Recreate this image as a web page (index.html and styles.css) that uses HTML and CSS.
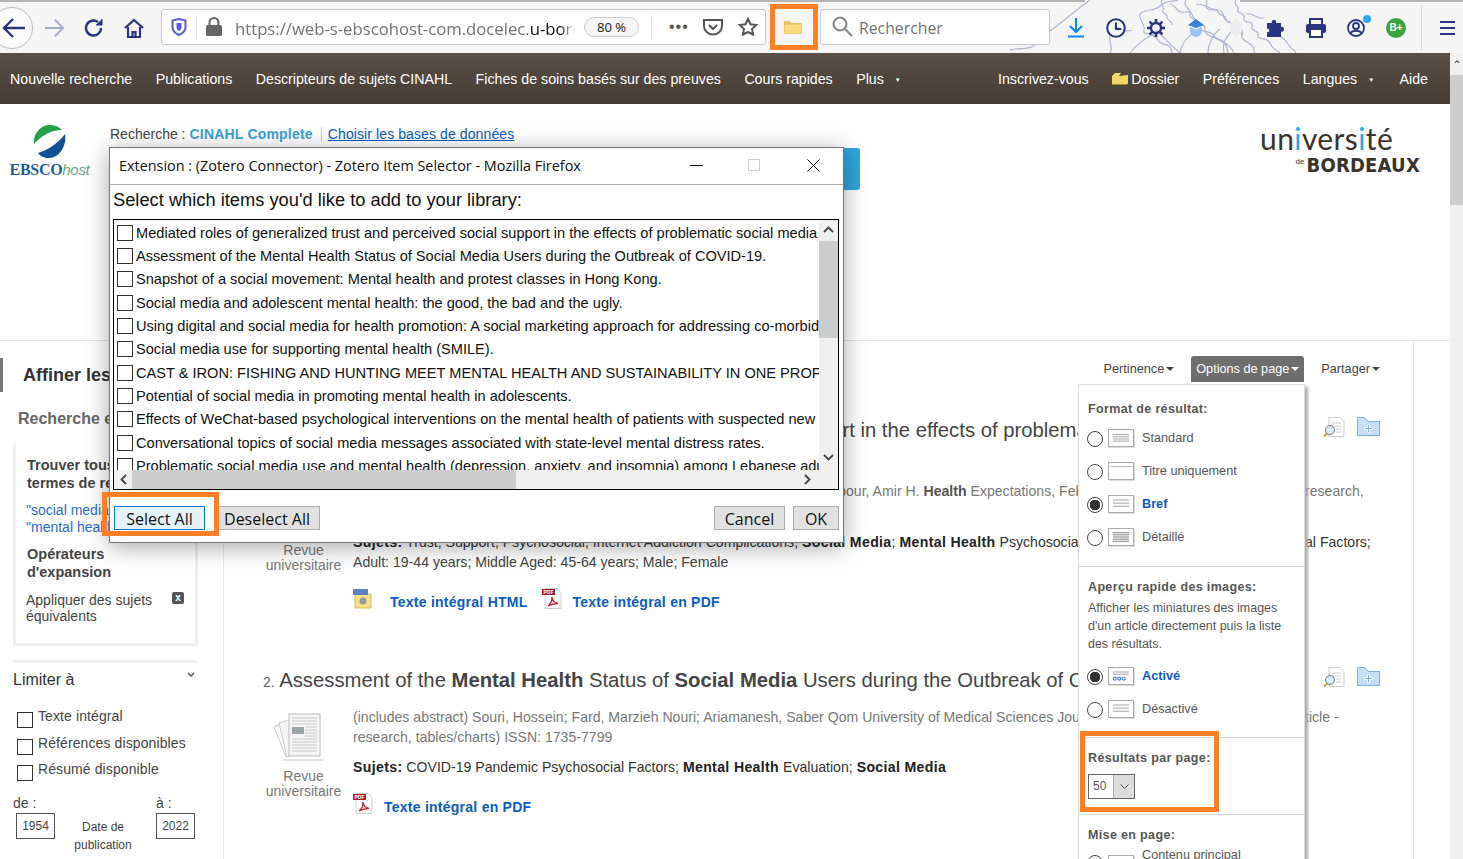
FILE: index.html
```html
<!DOCTYPE html>
<html lang="fr">
<head>
  <meta charset="UTF-8">
  <title>Résultats de la recherche : EBSCOhost</title>
  <link rel="stylesheet" href="styles.css">
</head>
<body>

<svg class="defs" width="0" height="0">
  <symbol id="fmt-std" viewBox="0 0 26 18"><path d="M4 5h18M4 7.500h18M4 10h18M4 12.500h18" stroke="#999" fill="none"/></symbol>
  <symbol id="fmt-title" viewBox="0 0 26 18"><path d="M1 4h24" stroke="#aaa" fill="none"/></symbol>
  <symbol id="fmt-brief" viewBox="0 0 26 18"><path d="M4 4.500h18M4 8h18M4 11.500h18" stroke="#999" fill="none"/></symbol>
  <symbol id="fmt-detail" viewBox="0 0 26 18"><path d="M4 4h18M4 6h18M4 8h18M4 10h18M4 12h18M4 14h18" stroke="#888" fill="none"/></symbol>
  <symbol id="fmt-thumb" viewBox="0 0 26 18"><path d="M4 4.500h18M4 7h18" stroke="#999" fill="none"/><path d="M4.500 10.500h3v3h-3zM9.500 10.500h3v3h-3zM14.500 10.500h3v3h-3z" stroke="#36c" fill="none"/></symbol>
  <symbol id="pdf" viewBox="0 0 20 21">
    <path d="M3 .5h12l4 4v16H3z" fill="#fff" stroke="#ccc"/>
    <rect x="0" y="1" width="13" height="6" fill="#a81e2d"/>
    <text x="1.500" y="6" font-family="Liberation Sans" font-size="5" font-weight="700" fill="#fff">PDF</text>
    <path d="M6 18c3-2 4-6 4-9 .5 4 3 6 6 6.500-4 0-7 1-10 2.500z" fill="none" stroke="#c4202c" stroke-width="1.300"/>
  </symbol>
  <symbol id="doc-find" viewBox="0 0 22 21">
    <path d="M6 .5h11l4 4v15H6z" fill="#fff" stroke="#ccc"/>
    <path d="M9 6h9M9 9h9M13 12h5M13 15h5" stroke="#ccc"/>
    <circle cx="7" cy="13" r="4.500" fill="#dcebf7" stroke="#777"/>
    <path d="M4 16.500l-3 3" stroke="#c9a02c" stroke-width="2"/>
  </symbol>
  <symbol id="folder-add" viewBox="0 0 23 19">
    <path d="M.5 18.500V.5h7l4 4h11v14z" fill="#c6def9" stroke="#7fb2ec"/>
    <path d="M11.500 7.500v8M7.500 11.500h8" stroke="#fff" stroke-width="3"/>
    <path d="M11.500 8v7M8 11.500h7" stroke="#7fb2ec"/>
  </symbol>
  <symbol id="journal" viewBox="0 0 50 50">
    <path d="M1 14l13-6 12 30-13 6z" fill="#fafafa" stroke="#ccc"/>
    <path d="M6 10l12-4 8 34-12 4z" fill="#f4f4f4" stroke="#ccc"/>
    <rect x="16" y="1" width="31" height="42" fill="#f5f5f5" stroke="#bbb"/>
    <path d="M19 5h25M19 8h25M19 11h25M32 14h12M32 17h12M32 20h12M32 23h12M19 26h25M19 29h25M19 32h25M19 35h25M19 38h25" stroke="#c8c8c8"/>
    <rect x="19" y="14" width="12" height="7" fill="#9aa5a8"/>
    <path d="M10 47h40" stroke="#e2e2e2" stroke-width="2"/>
  </symbol>
</svg>

<header class="toolbar">
  <svg class="lace" width="460" height="53" viewBox="0 0 460 53" fill="none" stroke="#aeb5d2" stroke-width="1.200">
    <path d="M0 50c10-3 18 1 26-6 8-6 6-10 12-12 8-4 30-24 42-32"/>
    <path d="M130 14c6-6 14-2 20-8 6-6 12-4 18-6M130 14c-2 6 6 10 4 16s10 2 14 10 12 0 14 13"/>
    <path d="M160 4c8 2 6 10 16 8s4 10 14 12 0 8 10 12 16 2 18 17"/>
    <path d="M176 0c-4 8 6 8 4 14s10 4 10 12 12 4 14 10 14 4 20 17"/>
    <path d="M146 30c6 4 10 12 24 23M120 53c6-8 14-14 24-19M170 53c2-10 8-18 18-22M186 4c10 0 14 6 22 6s2 10 12 12 14 8 12 14 14 6 12 17"/>
    <path d="M104 28c8-2 10 6 18 2M100 36c-2 6 4 12 0 17"/>
    <path d="M152 0c-3 5 3 6 1 10s5 3 4 7 6 3 5 8M196 0c3 4-3 6 2 9s8-2 10 3 8 2 8 7 8 3 8 8 7 2 8 8"/>
    <path d="M226 0c-3 6 4 6 2 10s8 2 6 8 10 2 8 8 8 4 6 9 10 2 12 8 5 6 10 10"/>
    <path d="M214 53c-2-10 2-16 8-22M198 53c0-8 4-18 12-24M236 14c8-2 10 6 18 4M262 36c6-2 12 2 16 8s6 5 8 9"/>
  </svg>
  <button class="back-btn"><svg width="24" height="22" viewBox="0 0 24 22" fill="none" stroke="#2a3480" stroke-width="2.400"><path d="M11 2L2 11l9 9M2 11h21"/></svg></button>
  <span class="tb-icon tb-forward"><svg width="22" height="20" viewBox="0 0 22 20" fill="none" stroke="#a5abcc" stroke-width="2.200"><path d="M12 1l9 9-9 9M21 10H1"/></svg></span>
  <span class="tb-icon"><svg width="20" height="20" viewBox="0 0 20 20" fill="none" stroke="#2a3480" stroke-width="2.400"><path d="M17 10a7.500 7.500 0 1 1-3-6"/><path d="M18 1v6h-6" fill="#2a3480" stroke-width="1"/></svg></span>
  <span class="tb-icon"><svg width="20" height="20" viewBox="0 0 20 20" fill="none" stroke="#2a3480" stroke-width="2.200"><path d="M1 10l9-8 9 8"/><path d="M4 9v10h12V9M8.500 19v-5h3v5"/></svg></span>

  <div class="urlbar">
    <svg class="url-shield" width="16" height="18" viewBox="0 0 16 18"><path d="M1.500 2.500L8 1l6.500 1.500V9c0 4-3 6.500-6.500 8C4.500 15.500 1.500 13 1.500 9z" fill="none" stroke="#5b5bd6" stroke-width="2"/><path d="M5.500 5h5v4c0 2-1 3-2.500 4C6.500 12 5.500 11 5.500 9z" fill="#5b5bd6"/></svg>
    <span class="url-sep"></span>
    <svg class="url-lock" width="16" height="19" viewBox="0 0 16 19"><path d="M3.500 8V5.500a4.500 4.500 0 0 1 9 0V8" fill="none" stroke="#666" stroke-width="2"/><rect y="8" width="16" height="11" rx="1.500" fill="#666"/></svg>
    <span class="url-text">https://web-s-ebscohost-com.docelec.<b>u-bordeaux.fr/ehost</b></span>
    <span class="url-zoom">80 %</span>
    <span class="url-sep url-sep-wide"></span>
    <span class="url-dots">•••</span>
    <svg class="url-pocket" width="20" height="18" viewBox="0 0 20 18" fill="none" stroke="#555" stroke-width="2"><path d="M1 2h18v6a9 8.500 0 0 1-18 0z"/><path d="M6 7l4 4 4-4"/></svg>
    <svg class="url-star" width="20" height="19" viewBox="0 0 20 19" fill="none" stroke="#555" stroke-width="2"><path d="M10 2l2.500 5.300 5.700.7-4.200 4 1.100 5.700L10 15l-5.100 2.700L6 12 1.800 8l5.700-.7z"/></svg>
  </div>

  <span class="tb-folder"><svg width="18" height="14" viewBox="0 0 18 14"><path d="M0 1h6l2 2h9v3H0z" fill="#e9c46a"/><rect y="4" width="18" height="10" fill="#f6dc7a" stroke="#e3b866"/></svg></span>

  <div class="searchbar">
    <svg width="21" height="21" viewBox="0 0 21 21" fill="none" stroke="#8a8a8a" stroke-width="2.200"><circle cx="8" cy="8" r="6.500"/><path d="M13 13l7 7"/></svg>
    <span>Rechercher</span>
  </div>

  <div class="tb-right">
    <span class="tb-slot"><svg width="18" height="20" viewBox="0 0 18 20" fill="none" stroke="#0a84ff" stroke-width="2"><path d="M9 0v13M3 8l6 6 6-6M1 18.500h16"/></svg></span>
    <span class="tb-slot"><svg width="20" height="20" viewBox="0 0 20 20" fill="none" stroke="#2a3480" stroke-width="2"><circle cx="10" cy="10" r="8.800"/><path d="M10 4.500V11h5"/></svg></span>
    <span class="tb-slot"><svg width="20" height="20" viewBox="0 0 20 20" fill="none" stroke="#2a3480"><circle cx="10" cy="10" r="5" stroke-width="2.400"/><path d="M10 1v4M10 15v4M1 10h4M15 10h4M3.600 3.600l3 3M13.400 13.400l3 3M16.400 3.600l-3 3M6.600 13.400l-3 3" stroke-width="2.600"/></svg></span>
    <span class="tb-slot"><svg width="18" height="18" viewBox="0 0 18 18"><path d="M9 0l8 6-8 3-8-3z" fill="#3b7fd8"/><path d="M3 8l6 2.500L15 8v4a6 6 0 0 1-12 0z" fill="#9cc3f5"/></svg></span>
    <span class="tb-slot"><svg width="14" height="18" viewBox="0 0 14 18"><path d="M7 0l6 4v9l-6 5-6-5V4z" fill="#ececee"/></svg></span>
    <span class="tb-slot"><svg width="20" height="20" viewBox="0 0 20 20"><path d="M1 5h5c-1.500-4 5.500-4 4 0h5v4c4-1.500 4 6 0 4.500V19H1v-5c3 1.500 3-4.500 0-3z" fill="#2a3480"/></svg></span>
    <span class="tb-slot"><svg width="20" height="20" viewBox="0 0 20 20"><path d="M4 8V1h12v7" fill="none" stroke="#2a3480" stroke-width="2"/><rect y="6" width="20" height="9" rx="2" fill="#2a3480"/><rect x="4" y="11" width="12" height="8" fill="#fff" stroke="#2a3480" stroke-width="2"/></svg></span>
    <span class="tb-slot tb-account"><svg width="18" height="18" viewBox="0 0 18 18" fill="none" stroke="#2a3480" stroke-width="1.800"><circle cx="9" cy="9" r="8"/><circle cx="9" cy="7" r="3"/><path d="M3.500 14c2-3 9-3 11 0"/></svg><i class="account-dot"></i></span>
    <span class="tb-slot"><span class="green-badge">B+</span></span>
  </div>
  <span class="tb-sep"></span>
  <span class="tb-menu"><i></i><i></i><i></i></span>
</header>

<div class="page">
  <div class="page-main">
    <nav class="topnav">
      <a>Nouvelle recherche</a>
      <a>Publications</a>
      <a>Descripteurs de sujets CINAHL</a>
      <a>Fiches de soins basés sur des preuves</a>
      <a>Cours rapides</a>
      <a>Plus <span class="nav-caret">▼</span></a>
      <span class="nav-spacer"></span>
      <a>Inscrivez-vous</a>
      <a class="nav-folder"><svg width="16" height="13" viewBox="0 0 16 13"><path d="M0 12V4l3-3h6L7 4l9-1v9z" fill="#f1d66b"/><path d="M0 12.500h15" stroke="#a8862a"/></svg>Dossier</a>
      <a>Préférences</a>
      <a>Langues <span class="nav-caret">▼</span></a>
      <a>Aide</a>
    </nav>

    <section class="masthead">
      <div class="ebsco-logo">
        <svg width="33" height="33" viewBox="0 0 33 33">
          <path d="M1 19C0 8 8 0 17 0c4 0 8 1 12 5C18 5 8 11 1 19z" fill="#25a04a"/>
          <path d="M32 9c2 11-5 24-16 24-5 0-9-2-11-5C12 26 24 20 32 9z" fill="#0f5196"/>
        </svg>
        <div class="ebsco-word">EBSCO<em>host</em></div>
      </div>
      <div class="search-head">
        <div class="search-line">Recherche : <b>CINAHL Complete</b><span class="pipe"></span><a>Choisir les bases de données</a></div>
        <div class="search-form"><span class="search-input"></span><span class="search-go"></span></div>
      </div>
      <div class="bx-logo">
        <div class="bx-top">un<span>i</span>vers<span>i</span>té</div>
        <div class="bx-bottom"><small>de</small>BORDEAUX</div>
      </div>
    </section>

    <div class="content">
      <aside class="sidebar">
        <div class="side-head">Affiner les résultats</div>
        <div class="side-sub">Recherche en cours</div>
        <div class="side-box">
          <div class="box-title">Trouver tous mes<br>termes de recherche :</div>
          <div class="box-query">"social media" AND<br>"mental health"</div>
          <div class="box-title box-ops">Opérateurs<br>d'expansion</div>
          <div class="box-apply"><span>Appliquer des sujets équivalents</span><i class="box-x">x</i></div>
        </div>
        <div class="side-rule"></div>
        <div class="limit-head">Limiter à <svg width="8" height="6" viewBox="0 0 8 6" fill="none" stroke="#555" stroke-width="1.500"><path d="M1 1l3 3 3-3"/></svg></div>
        <label class="limit-row"><input type="checkbox"><span>Texte intégral</span></label>
        <label class="limit-row"><input type="checkbox"><span>Références disponibles</span></label>
        <label class="limit-row"><input type="checkbox"><span>Résumé disponible</span></label>
        <div class="dates">
          <span>de :</span><span>à :</span>
          <div class="date-from"><span class="date-field">1954</span><span class="date-label">Date de publication</span></div>
          <span class="date-field">2022</span>
        </div>
      </aside>

      <main class="results">
        <div class="sort-row">
          <span class="sort-item">Pertinence<i class="caret"></i></span>
          <span class="sort-item sort-active">Options de page<i class="caret"></i></span>
          <span class="sort-item">Partager<i class="caret"></i></span>
        </div>

        <article class="result result-first">
          <div class="result-head">
            <h3 class="result-title"><span class="num">1.</span> Mediated roles of generalized trust and perceived social support in the effects of problematic social media use</h3>
            <svg class="tool" width="22" height="21"><use href="#doc-find"/></svg>
            <svg class="tool" width="23" height="19"><use href="#folder-add"/></svg>
          </div>
          <div class="result-row">
            <div class="rtype rtype-tall"><svg width="50" height="50"><use href="#journal"/></svg><div>Revue universitaire</div></div>
            <div class="rbody">
              <div class="rline"><span>Mediated roles of generalized trust and perceived social support</span></div>
              <div class="rline"><span>(includes abstract) Yuan, Qiang; Sarafraz, Mohammad; Griffiths, Mark D.; Pakpour, Amir H. <b class="hit">Health</b> Expectations, Feb</span><span>research,</span></div>
              <div class="rline"><span>tables/charts)</span></div>
              <div class="rline rline-sub"><span><b>Sujets:</b> Trust; Support, Psychosocial; Internet Addiction Complications; <b>Social Media</b>; <b>Mental Health</b> Psychosocial Factors;</span><span>al Factors;</span></div>
              <div class="rline rline-dark"><span>Adult: 19-44 years; Middle Aged: 45-64 years; Male; Female</span></div>
              <div class="rlinks">
                <svg width="20" height="21" viewBox="0 0 20 21"><path d="M2 6h16v14H2z" fill="#f5e08a" stroke="#d6bd5e"/><rect y="1" width="15" height="6" fill="#5b7fc0"/><circle cx="10" cy="13" r="3.500" fill="#999"/></svg>
                <a class="link-html">Texte intégral HTML</a>
                <svg width="20" height="21"><use href="#pdf"/></svg>
                <a class="link-pdf">Texte intégral en PDF</a>
              </div>
            </div>
          </div>
        </article>

        <article class="result">
          <div class="result-head">
            <h3 class="result-title"><span class="num">2.</span> Assessment of the <b>Mental Health</b> Status of <b>Social Media</b> Users during the Outbreak of COVID-19.</h3>
            <svg class="tool" width="22" height="21"><use href="#doc-find"/></svg>
            <svg class="tool" width="23" height="19"><use href="#folder-add"/></svg>
          </div>
          <div class="result-row">
            <div class="rtype"><svg width="50" height="50"><use href="#journal"/></svg><div>Revue universitaire</div></div>
            <div class="rbody">
              <div class="rline"><span>(includes abstract) Souri, Hossein; Fard, Marzieh Nouri; Ariamanesh, Saber Qom University of Medical Sciences Journal</span><span>ticle -</span></div>
              <div class="rline"><span>research, tables/charts) ISSN: 1735-7799</span></div>
              <div class="rline rline-sub"><span><b>Sujets:</b> COVID-19 Pandemic Psychosocial Factors; <b>Mental Health</b> Evaluation; <b>Social Media</b></span></div>
              <div class="rlinks rlinks-single">
                <svg width="20" height="21"><use href="#pdf"/></svg>
                <a>Texte intégral en PDF</a>
              </div>
            </div>
          </div>
        </article>
      </main>
    </div>
  </div>
  <div class="vscroll"><span class="vscroll-arrow">⌃</span><span class="vscroll-thumb"></span></div>
</div>

<div class="options-menu">
  <section class="opt-section opt-format">
    <h4>Format de résultat:</h4>
    <label class="opt-row"><input type="radio" name="fmt"><svg class="fmt"><use href="#fmt-std"/></svg>Standard</label>
    <label class="opt-row"><input type="radio" name="fmt"><svg class="fmt"><use href="#fmt-title"/></svg>Titre uniquement</label>
    <label class="opt-row opt-on"><input type="radio" name="fmt" checked><svg class="fmt"><use href="#fmt-brief"/></svg>Bref</label>
    <label class="opt-row"><input type="radio" name="fmt"><svg class="fmt"><use href="#fmt-detail"/></svg>Détaillé</label>
  </section>
  <section class="opt-section opt-preview">
    <h4>Aperçu rapide des images:</h4>
    <p>Afficher les miniatures des images d'un article directement puis la liste des résultats.</p>
    <label class="opt-row opt-on"><input type="radio" name="pre" checked><svg class="fmt"><use href="#fmt-thumb"/></svg>Activé</label>
    <label class="opt-row"><input type="radio" name="pre"><svg class="fmt"><use href="#fmt-brief"/></svg>Désactivé</label>
  </section>
  <section class="opt-section opt-count">
    <h4>Résultats par page:</h4>
    <div class="count-select"><span>50</span><i><svg width="9" height="5" viewBox="0 0 9 5" fill="none" stroke="#555"><path d="M.5.500l4 4 4-4"/></svg></i></div>
  </section>
  <section class="opt-section opt-layout">
    <h4>Mise en page:</h4>
    <label class="opt-row opt-row-top"><input type="radio" name="lay"><svg class="fmt"><use href="#fmt-brief"/></svg>Contenu principal</label>
  </section>
</div>

<div class="dialog">
  <div class="dialog-title">
    <span>Extension : (Zotero Connector) - Zotero Item Selector - Mozilla Firefox</span>
    <svg class="win-min" width="13" height="1"><path d="M0 .5h13" stroke="#000"/></svg>
    <svg class="win-max" width="12" height="12"><path d="M.5.500h11v11H.5z" fill="none" stroke="#ccc"/></svg>
    <svg class="win-close" width="13" height="13"><path d="M.5.500l12 12M12.500.500l-12 12" stroke="#000"/></svg>
  </div>
  <div class="dialog-body">
    <div class="dialog-lead">Select which items you'd like to add to your library:</div>
    <div class="pick-box">
      <ul class="pick-list">
        <li><input type="checkbox">Mediated roles of generalized trust and perceived social support in the effects of problematic social media</li>
        <li><input type="checkbox">Assessment of the Mental Health Status of Social Media Users during the Outbreak of COVID-19.</li>
        <li><input type="checkbox">Snapshot of a social movement: Mental health and protest classes in Hong Kong.</li>
        <li><input type="checkbox">Social media and adolescent mental health: the good, the bad and the ugly.</li>
        <li><input type="checkbox">Using digital and social media for health promotion: A social marketing approach for addressing co-morbid physical and mental illness.</li>
        <li><input type="checkbox">Social media use for supporting mental health (SMILE).</li>
        <li><input type="checkbox">CAST &amp; IRON: FISHING AND HUNTING MEET MENTAL HEALTH AND SUSTAINABILITY IN ONE PROFESSION.</li>
        <li><input type="checkbox">Potential of social media in promoting mental health in adolescents.</li>
        <li><input type="checkbox">Effects of WeChat-based psychological interventions on the mental health of patients with suspected new coronavirus pneumonia.</li>
        <li><input type="checkbox">Conversational topics of social media messages associated with state-level mental distress rates.</li>
        <li><input type="checkbox">Problematic social media use and mental health (depression, anxiety, and insomnia) among Lebanese adults during the COVID-19 pandemic.</li>
      </ul>
      <div class="pick-vbar">
        <svg width="11" height="7" viewBox="0 0 11 7" fill="none" stroke="#444" stroke-width="1.800"><path d="M1 6l4.500-4.500L10 6"/></svg>
        <span class="pick-vthumb"></span>
        <svg class="arrow-end" width="11" height="7" viewBox="0 0 11 7" fill="none" stroke="#444" stroke-width="1.800"><path d="M1 1l4.500 4.500L10 1"/></svg>
      </div>
      <div class="pick-hbar">
        <svg width="7" height="11" viewBox="0 0 7 11" fill="none" stroke="#444" stroke-width="1.800"><path d="M6 1L1.500 5.500 6 10"/></svg>
        <span class="pick-hthumb"></span>
        <svg class="arrow-end" width="7" height="11" viewBox="0 0 7 11" fill="none" stroke="#444" stroke-width="1.800"><path d="M1 1l4.500 4.500L1 10"/></svg>
      </div>
    </div>
    <div class="dialog-actions">
      <button class="dlg-btn dlg-primary">Select All</button>
      <button class="dlg-btn dlg-deselect">Deselect All</button>
      <span class="actions-spacer"></span>
      <button class="dlg-btn dlg-cancel">Cancel</button>
      <button class="dlg-btn dlg-ok">OK</button>
    </div>
  </div>
</div>

<div class="mark mark-folder"></div>
<div class="mark mark-select"></div>
<div class="mark mark-count"></div>

</body>
</html>
```

FILE: styles.css
```css
* {
  box-sizing: border-box;
}
html, body {
  height: 859px;
  overflow: hidden;
}
body {
  margin: 0;
  position: relative;
  font-family: "Liberation Sans", Arial, sans-serif;
  font-size: 14px;
  color: #444;
  background: #fff;
}
.defs {
  position: absolute;
}
h3, h4, p, ul {
  margin: 0;
  padding: 0;
}

/* browser toolbar */
.toolbar {
  position: relative;
  height: 53px;
  display: flex;
  align-items: center;
  padding-top: 2px;
  background: linear-gradient(to right, #b3b3b8 1085px, transparent 1085px, transparent 1240px, #b3b3b8 1240px) top left / 100% 2px no-repeat #f5f5f6;
  overflow: hidden;
}
.lace {
  position: absolute;
  left: 1010px;
  top: 0;
}
.back-btn {
  width: 42px;
  height: 42px;
  margin-left: -9px;
  padding: 0 0 0 6px;
  border: 1px solid #bbb;
  border-radius: 50%;
  background: #fafafa;
  display: flex;
  align-items: center;
  justify-content: flex-start;
  flex: none;
  position: relative;
}
.back-btn svg {
  margin-left: 4px;
}
.tb-icon {
  width: 20px;
  margin-left: 20px;
  display: flex;
  justify-content: center;
  flex: none;
  position: relative;
}
.tb-forward {
  margin-left: 11px;
}
.urlbar {
  width: 605px;
  height: 36px;
  margin-left: 17px;
  margin-top: -2px;
  display: flex;
  align-items: center;
  flex: none;
  position: relative;
  background: #fff;
  border: 1px solid #c8c8cc;
  border-radius: 3px;
}
.url-shield {
  margin-left: 9px;
}
.url-sep {
  width: 1px;
  height: 24px;
  margin-left: 9px;
  background: #e3e3e3;
}
.url-lock {
  margin-left: 9px;
}
.url-text {
  width: 340px;
  margin-left: 13px;
  padding-top: 3px;
  overflow: hidden;
  white-space: nowrap;
  font-family: "Open Sans", sans-serif;
  font-size: 16.700px;
  color: #737373;
  -webkit-mask-image: linear-gradient(to right, #000 325px, transparent 340px);
  mask-image: linear-gradient(to right, #000 325px, transparent 340px);
}
.url-text b {
  font-weight: 400;
  color: #111;
}
.url-zoom {
  width: 55px;
  height: 20px;
  margin-left: 9px;
  border: 1px solid #ccc;
  border-radius: 10px;
  background: #f5f5f5;
  color: #222;
  font-size: 13px;
  line-height: 18px;
  text-align: center;
  font-family: "Open Sans", sans-serif;
}
.url-sep-wide {
  margin-left: 12px;
}
.url-dots {
  margin-left: 17px;
  font-size: 16px;
  letter-spacing: 1px;
  color: #555;
}
.url-pocket {
  margin-left: 14px;
}
.url-star {
  margin-left: 15px;
}
.tb-folder {
  width: 54px;
  display: flex;
  justify-content: center;
  flex: none;
  margin-top: -2px;
}
.searchbar {
  width: 230px;
  height: 36px;
  margin-top: -2px;
  padding-left: 11px;
  display: flex;
  align-items: center;
  gap: 6px;
  flex: none;
  position: relative;
  background: #fff;
  border: 1px solid #c8c8cc;
  border-radius: 3px;
  font-family: "Open Sans", sans-serif;
  font-size: 15.800px;
  color: #737373;
}
.searchbar span {
  padding-top: 3px;
}
.tb-right {
  margin-left: 6px;
  display: flex;
  flex: none;
  position: relative;
}
.tb-slot {
  width: 40px;
  height: 24px;
  position: relative;
  display: flex;
  align-items: center;
  justify-content: center;
}
.account-dot {
  position: absolute;
  right: 5px;
  top: -1px;
  width: 8px;
  height: 8px;
  border-radius: 50%;
  background: #29a8f0;
}
.green-badge {
  width: 20px;
  height: 20px;
  border-radius: 50%;
  background: #38a33f;
  color: #fff;
  font-size: 10px;
  font-weight: 700;
  line-height: 20px;
  text-align: center;
}
.tb-sep {
  width: 1px;
  height: 44px;
  margin-left: 5px;
  background: #dcdcdc;
  position: relative;
}
.tb-menu {
  width: 15px;
  margin-left: 18px;
  display: flex;
  flex-direction: column;
  gap: 4px;
  position: relative;
}
.tb-menu i {
  height: 2px;
  background: #2a3480;
}

.page {
  display: flex;
  height: 806px;
}
.page-main {
  flex: 1;
  min-width: 0;
}
.vscroll {
  width: 13px;
  background: #f0f0f0;
  display: flex;
  flex-direction: column;
  align-items: center;
  flex: none;
}
.vscroll-arrow {
  height: 22px;
  font-size: 12px;
  line-height: 24px;
  color: #555;
}
.vscroll-thumb {
  width: 100%;
  height: 130px;
  background: #cdcdcd;
}

/* ebsco nav */
.topnav {
  height: 51px;
  padding: 0 22px 0 10px;
  display: flex;
  align-items: center;
  gap: 23.500px;
  background: linear-gradient(#5a4f46, #463c33);
  color: #fff;
  font-size: 14.200px;
  white-space: nowrap;
}
.nav-spacer {
  flex: 1;
}
.nav-caret {
  display: inline-block;
  margin-left: 7px;
  padding-right: 2px;
  font-size: 6px;
  vertical-align: 2px;
}
.nav-folder {
  display: flex;
  align-items: center;
  gap: 3px;
}

.masthead {
  height: 237px;
  padding: 20px 30px 0 9px;
  display: flex;
  border-bottom: 1px solid #e5e5e5;
}
.ebsco-logo {
  width: 81px;
  text-align: center;
  flex: none;
}
.ebsco-logo svg {
  display: block;
  margin: 1px auto 0;
}
.ebsco-word {
  margin-top: 3px;
  font-family: "Liberation Serif", serif;
  font-size: 16px;
  font-weight: 700;
  color: #1c5c9c;
  letter-spacing: -0.3px;
  white-space: nowrap;
}
.ebsco-word em {
  font-family: "Liberation Sans", sans-serif;
  font-weight: 400;
  font-size: 15px;
  color: #6aa88c;
}
.search-head {
  margin-left: 20px;
  width: 750px;
}
.search-line {
  display: flex;
  align-items: center;
  height: 20px;
  gap: 4px;
}
.search-line b {
  color: #3aa0dc;
  letter-spacing: .2px;
}
.search-line a {
  color: #0a5cc8;
  text-decoration: underline;
  letter-spacing: .1px;
}
.pipe {
  width: 1px;
  height: 15px;
  margin: 0 2px 0 4px;
  background: #ccc;
}
.search-form {
  display: flex;
  justify-content: space-between;
  height: 42px;
  margin-top: 4px;
}
.search-go {
  width: 120px;
  background: #31a6dc;
  border-radius: 3px;
}
.bx-logo {
  margin-left: auto;
  width: 160px;
  color: #39332e;
  white-space: nowrap;
}
.bx-top {
  font-family: Lato, sans-serif;
  font-weight: 400;
  font-size: 30px;
  line-height: 28px;
  letter-spacing: .4px;
}
.bx-top span {
  color: #2aa7df;
}
.bx-bottom {
  font-family: "Liberation Sans Narrow", "DejaVu Sans Condensed", sans-serif;
  font-weight: 700;
  font-size: 20px;
  line-height: 19px;
  letter-spacing: .2px;
  text-align: right;
}
.bx-bottom small {
  font-family: "Liberation Sans", sans-serif;
  font-size: 8px;
  font-weight: 400;
  letter-spacing: 0;
  vertical-align: 8px;
  margin-right: 2px;
}

.content {
  display: flex;
  height: 518px;
}

/* left column */
.sidebar {
  width: 224px;
  flex: none;
  padding-left: 13px;
  border-right: 1px solid #e8e8e8;
}
.side-head {
  height: 34px;
  margin: 17px 0 0 -13px;
  padding-left: 20px;
  border-left: 3px solid #777;
  font-size: 18px;
  font-weight: 700;
  line-height: 34px;
  color: #333;
  white-space: nowrap;
}
.side-sub {
  margin: 17px 0 0 5px;
  font-size: 16px;
  font-weight: 700;
  line-height: 20px;
  color: #666;
  white-space: nowrap;
}
.side-box {
  width: 185px;
  height: 204px;
  margin-top: 13px;
  padding: 11px 11px 0;
  border: 3px solid #eee;
  border-top-color: #fff;
}
.box-title {
  font-size: 14.500px;
  font-weight: 700;
  line-height: 18px;
  color: #444;
  white-space: nowrap;
}
.box-query {
  margin: 10px 0 0 -1px;
  line-height: 17px;
  color: #2a6ad0;
  white-space: nowrap;
}
.box-ops {
  margin-top: 9px;
}
.box-apply {
  margin: 11px 0 0 -1px;
  display: flex;
  justify-content: space-between;
  line-height: 16px;
}
.box-apply span {
  width: 135px;
}
.box-x {
  width: 12px;
  height: 12px;
  margin: 0;
  background: #555;
  border-radius: 2px;
  color: #fff;
  font-size: 10px;
  font-style: normal;
  font-weight: 700;
  line-height: 11px;
  text-align: center;
}
.side-rule {
  width: 185px;
  height: 3px;
  margin-top: 14px;
  background: #f0f0f0;
}
.limit-head {
  width: 185px;
  margin: 6px 0 12px;
  padding-right: 3px;
  display: flex;
  justify-content: space-between;
  font-size: 16px;
  line-height: 22px;
  color: #333;
}
.limit-head svg {
  margin: 3px 0 0;
}
.limit-row {
  height: 26.500px;
  margin-left: 4px;
  display: flex;
  gap: 5px;
  line-height: 26px;
  letter-spacing: .1px;
}
.limit-row input, .pick-list input {
  appearance: none;
  width: 16px;
  height: 16px;
  margin: 0;
  flex: none;
  background: #fff;
  border: 1px solid #333;
}
.limit-row input {
  margin-top: 9px;
}
.dates {
  margin-top: 11px;
  display: grid;
  grid-template-columns: 138px 42px;
  column-gap: 5px;
  line-height: 18px;
}
.date-from {
  display: flex;
}
.date-field {
  width: 39px;
  height: 26px;
  margin: 1px 0 0 3px;
  border: 1px solid #555;
  font-size: 12px;
  line-height: 24px;
  text-align: center;
  flex: none;
}
.date-from .date-label {
  flex: 1;
  margin-top: 6px;
  font-size: 12px;
  text-align: center;
}
.dates > .date-field {
  margin-left: 0;
}

/* results */
.results {
  flex: 1;
  min-width: 0;
  margin-right: 36px;
  padding-left: 39px;
  border-right: 1px solid #e8e8e8;
}
.sort-row {
  height: 26px;
  margin-top: 15px;
  padding-right: 33px;
  display: flex;
  justify-content: flex-end;
  align-items: center;
  gap: 17px;
  font-size: 12.700px;
}
.sort-item {
  height: 26px;
  padding-top: 1px;
  line-height: 25px;
  white-space: nowrap;
}
.sort-active {
  padding: 1px 5px 0;
  background: #6e6e6e;
  border-radius: 3px 3px 0 0;
  color: #fff;
}
.caret {
  display: inline-block;
  margin: 0 0 2px 2px;
  border: 4px solid transparent;
  border-bottom: 0;
  border-top-color: currentColor;
}
.result {
  margin-bottom: 54px;
}
.result-first {
  margin-top: 34px;
}
.result-head {
  height: 28px;
  display: flex;
}
.result-title {
  width: 815px;
  flex: none;
  overflow: hidden;
  white-space: nowrap;
  font-size: 20.270px;
  font-weight: 400;
  line-height: 28px;
  color: #444;
}
.result-title .num {
  font-size: 14px;
  color: #666;
}
.tool {
  margin-top: 1px;
  flex: none;
}
.tool:first-of-type {
  margin-left: 245px;
}
.tool + .tool {
  margin-left: 12px;
}
.result-row {
  margin-top: 13px;
  display: flex;
}
.result-first .result-row {
  margin-top: 17px;
}
.rtype {
  width: 80px;
  margin-right: 10px;
  padding-left: 1px;
  flex: none;
  color: #777;
  line-height: 15px;
  text-align: center;
}
.rtype svg {
  display: block;
  margin: 6px auto 6px;
  transform: translateX(-6px);
}
.rtype-tall {
  padding-top: 20px;
}
.rbody {
  flex: 1;
  min-width: 0;
}
.rline {
  display: grid;
  grid-template-columns: 725px 1fr;
  column-gap: 227px;
  font-size: 14.100px;
  line-height: 20px;
  color: #777;
  white-space: nowrap;
}
.rline > span:first-child {
  overflow: hidden;
}
.rline b {
  letter-spacing: .35px;
}
.rline .hit {
  color: #555;
  letter-spacing: 0;
}
.rline-sub {
  margin-top: 10px;
  color: #333;
}
.result-first .rline-sub {
  margin-top: 11px;
}
.rline-sub b {
  color: #222;
}
.rline-dark {
  color: #444;
}
.rlinks {
  margin-top: 20px;
  height: 20px;
  display: flex;
  align-items: center;
}
.rlinks svg {
  flex: none;
  margin-top: -8px;
}
.rlinks a {
  color: #0a5cc8;
  font-weight: 700;
  white-space: nowrap;
  letter-spacing: .25px;
}
.link-html {
  margin: 0 14px 0 17px;
}
.link-pdf {
  margin-left: 11px;
}
.rlinks-single {
  margin-top: 20px;
}
.rlinks-single a {
  margin-left: 11px;
}

/* page options dropdown */
.options-menu {
  position: absolute;
  left: 1078px;
  top: 384px;
  width: 227px;
  height: 480px;
  background: #fff;
  border: 1px solid #ddd;
  box-shadow: 3px 3px 3px #aaa;
  color: #555;
  font-size: 12.700px;
}
.opt-section {
  padding: 16px 0 0 9px;
  border-bottom: 1px solid #d4d4d4;
}
.opt-section h4 {
  font-size: 12.500px;
  line-height: 16px;
  letter-spacing: .35px;
  color: #555;
  white-space: nowrap;
}
.opt-format {
  height: 182px;
}
.opt-format h4 {
  margin-bottom: 4px;
}
.opt-preview {
  height: 171px;
  padding-top: 12px;
}
.opt-preview p {
  width: 205px;
  margin: 4px 0 6px;
  font-size: 12.450px;
  line-height: 18px;
}
.opt-count {
  height: 77px;
  padding-top: 12px;
}
.opt-layout {
  padding-top: 12px;
  border-bottom: 0;
}
.opt-layout h4 {
  margin-bottom: 4px;
}
.opt-row {
  height: 33px;
  margin-left: -1px;
  display: flex;
  align-items: center;
  white-space: nowrap;
}
.opt-row-top {
  align-items: flex-start;
  line-height: 16px;
}
.opt-row-top input, .opt-row-top .fmt {
  margin-top: 8px;
}
.opt-row input {
  appearance: none;
  width: 16px;
  height: 16px;
  margin-right: 5px;
  margin-left: 0;
  margin-bottom: 0;
  flex: none;
  background: #fff;
  border: 1px solid #444;
  border-radius: 50%;
}
.opt-row input:checked {
  background: radial-gradient(circle, #333 5px, #fff 5.500px);
}
.opt-on {
  color: #0a5cc8;
  font-weight: 700;
}
.fmt {
  width: 26px;
  height: 18px;
  margin-right: 8px;
  flex: none;
  background: #fff;
  border: 1px solid #aaa;
  box-shadow: 1px 1px 0 #ddd;
}
.count-select {
  width: 47px;
  height: 25px;
  margin-top: 8px;
  display: flex;
  border: 1px solid #666;
  font-size: 12px;
  line-height: 23px;
  padding-left: 4px;
}
.count-select span {
  flex: 1;
}
.count-select i {
  width: 21px;
  display: flex;
  align-items: center;
  justify-content: center;
  background: #ddd;
  border-left: 1px solid #aaa;
}

/* zotero window */
.dialog {
  position: absolute;
  left: 109px;
  top: 147px;
  width: 735px;
  height: 396px;
  display: flex;
  flex-direction: column;
  background: #fff;
  border: 1px solid #777;
  box-shadow: 0 4px 22px rgba(0, 0, 0, .35);
  color: #111;
}
.dialog-title {
  height: 37px;
  padding: 0 0 2px 9px;
  display: flex;
  align-items: center;
  flex: none;
  border-bottom: 1px solid #aaa;
  font-family: "Open Sans", sans-serif;
  font-size: 14.400px;
  white-space: nowrap;
}
.dialog-title span {
  width: 571px;
}
.win-max {
  margin-left: 45px;
}
.win-close {
  margin-left: 47px;
}
.dialog-body {
  flex: 1;
  padding: 0 4px 0 3px;
  display: flex;
  flex-direction: column;
}
.dialog-lead {
  height: 34px;
  font-size: 18.300px;
  line-height: 30px;
  white-space: nowrap;
}
.pick-box {
  height: 271px;
  display: grid;
  grid-template-columns: 1fr 19px;
  grid-template-rows: 1fr 19px;
  border: 1px solid #000;
}
.pick-list {
  min-width: 0;
  padding-top: 1px;
  overflow: hidden;
  list-style: none;
}
.pick-list li {
  height: 23.330px;
  padding-left: 3px;
  display: flex;
  align-items: center;
  gap: 3px;
  white-space: nowrap;
  font-size: 14.600px;
}
.pick-vbar {
  grid-row: 1 / 3;
  grid-column: 2;
  display: flex;
  flex-direction: column;
  align-items: center;
  background: #f0f0f0;
  padding: 6px 0 0;
}
.pick-vthumb {
  width: 100%;
  height: 97px;
  margin-top: 8px;
  background: #cdcdcd;
}
.pick-vbar .arrow-end {
  margin-top: auto;
  margin-bottom: 28px;
}
.pick-hbar {
  display: flex;
  align-items: center;
  background: #f0f0f0;
  padding: 0 8px 0 6px;
}
.pick-hthumb {
  width: 384px;
  height: 100%;
  margin-left: 5px;
  background: #cdcdcd;
}
.pick-hbar .arrow-end {
  margin-left: auto;
}
.dialog-actions {
  margin-top: 16px;
  display: flex;
}
.actions-spacer {
  flex: 1;
}
.dlg-btn {
  height: 24px;
  padding: 1px 0 0;
  background: #e1e1e1;
  border: 1px solid #adadad;
  font-family: "Open Sans", sans-serif;
  font-size: 16px;
  color: #111;
}
.dlg-primary {
  width: 91px;
  margin-left: 1px;
  background: #e5f1fb;
  border-color: #0078d7;
}
.dlg-deselect {
  width: 106px;
  margin-left: 9px;
}
.dlg-cancel {
  width: 71px;
}
.dlg-ok {
  width: 46px;
  margin-left: 8px;
}

/* orange call-outs drawn on the capture */
.mark {
  position: absolute;
  border: 5px solid #ff7f27;
}
.mark-folder {
  left: 770px;
  top: 4px;
  width: 48px;
  height: 46px;
}
.mark-select {
  left: 102px;
  top: 492px;
  width: 117px;
  height: 44px;
}
.mark-count {
  left: 1080px;
  top: 731px;
  width: 139px;
  height: 81px;
}
```
